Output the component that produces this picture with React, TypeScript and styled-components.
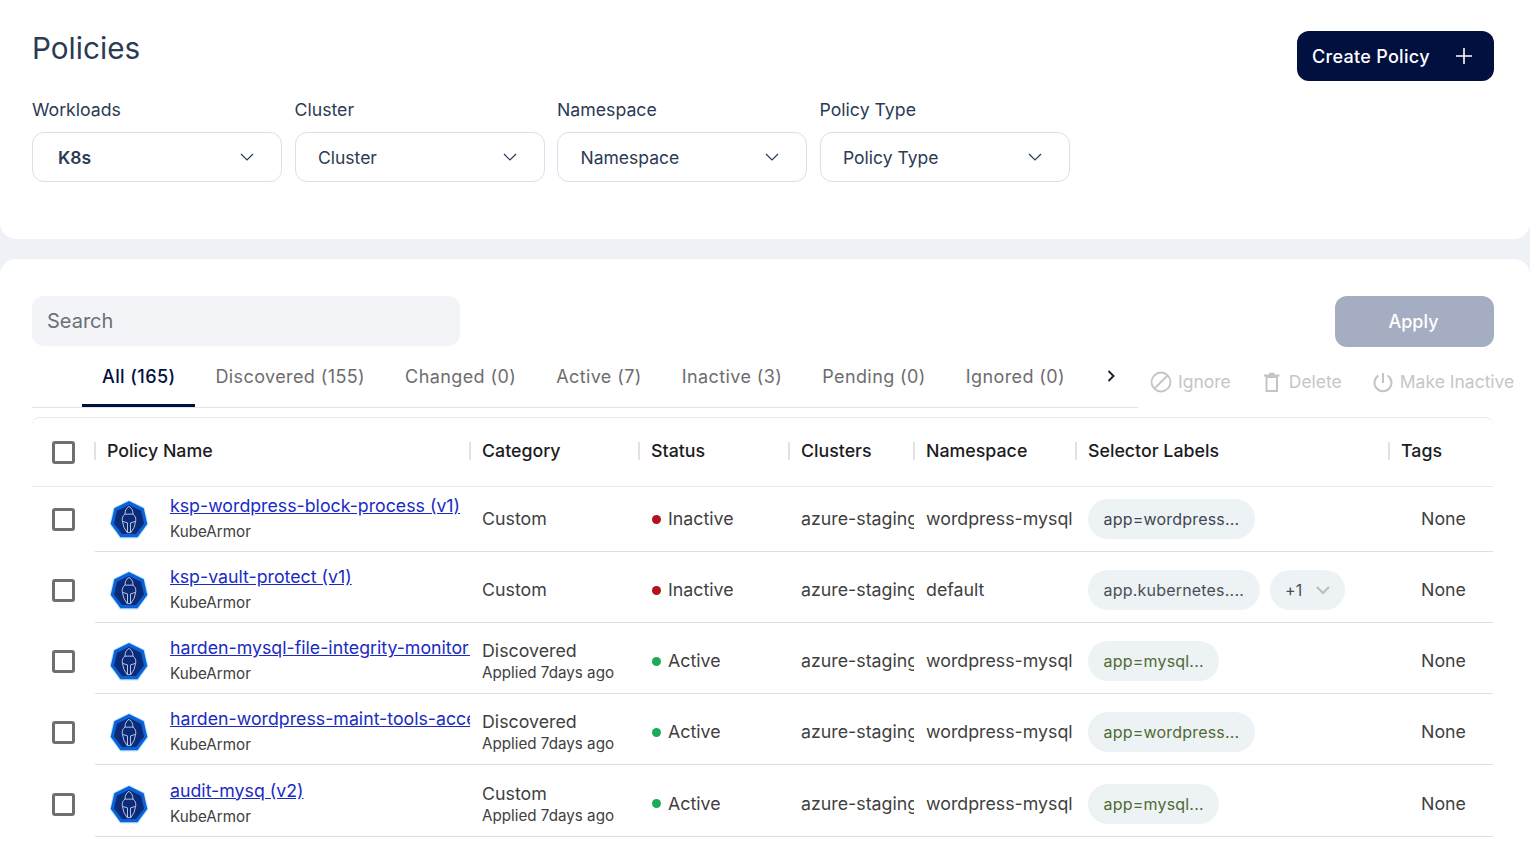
import React from 'react';
import styled, { createGlobalStyle } from 'styled-components';

const GlobalStyle = createGlobalStyle`
	html, body {
		margin: 0;
		padding: 0;
		height: 843px;
		overflow: hidden;
		background: #eef1f6;
		font-family: Inter, 'Liberation Sans', sans-serif;
	}
	* {
		box-sizing: border-box;
	}
`;

const FilterPanel = styled.section`
	height: 239px;
	padding: 31px 36px 0 32px;
	background: #fff;
	border-radius: 0 0 16px 16px;
	display: flex;
	justify-content: space-between;
	align-items: flex-start;
`;

const Title = styled.h1`
	margin: 0 0 27px;
	height: 35px;
	font-size: 29.7px;
	line-height: 35px;
	font-weight: 400;
	color: #2b3a55;
`;

const Filters = styled.div`
	display: flex;
	gap: 12.5px;
`;

const Filter = styled.div`
	width: 250px;
`;

const FilterLabel = styled.div`
	height: 35px;
	margin-bottom: 4px;
	font-size: 17.7px;
	line-height: 33px;
	color: #2b3a55;
`;

const Select = styled.div<{ $bold?: boolean; $inset?: number }>`
	height: 50px;
	padding: 0 27px 0 ${(p) => p.$inset ?? 22.5}px;
	border: 1px solid #d9dfec;
	border-radius: 12px;
	display: flex;
	justify-content: space-between;
	align-items: center;
	font-size: 17.5px;
	font-weight: ${(p) => (p.$bold ? 600 : 400)};
	color: #2b3a55;
`;

const CreateButton = styled.button`
	width: 197px;
	height: 50px;
	padding: 0 21px 0 15px;
	border: 0;
	border-radius: 12px;
	background: #02103f;
	color: #fff;
	display: flex;
	justify-content: space-between;
	align-items: center;
	font: 500 18px Inter, 'Liberation Sans', sans-serif;
	letter-spacing: 0.3px;
`;

const ListPanel = styled.section`
	height: 584px;
	margin-top: 20px;
	padding: 37px 0 0 32px;
	background: #fff;
	border-radius: 16px 16px 0 0;
	overflow: hidden;
`;

const SearchRow = styled.div`
	height: 51px;
	padding-right: 36px;
	display: flex;
	justify-content: space-between;
`;

const SearchBox = styled.div`
	width: 428px;
	height: 50px;
	padding-left: 15px;
	border-radius: 12px;
	background: #f2f4f8;
	display: flex;
	align-items: center;
	font-size: 20px;
	color: #6b6f76;
`;

const ApplyButton = styled.button`
	width: 159px;
	height: 51px;
	padding: 0 2px 0 0;
	border: 0;
	border-radius: 12px;
	background: #a4adc2;
	color: #fff;
	font: 500 18px Inter, 'Liberation Sans', sans-serif;
`;

const TabRow = styled.div`
	height: 61px;
	display: flex;
	align-items: flex-start;
`;

const Tabs = styled.div`
	width: 1106px;
	height: 61px;
	padding: 10px 0 0 50px;
	border-bottom: 1px solid #e2e4ea;
	display: flex;
`;

const Tab = styled.div<{ $active?: boolean }>`
	height: 50px;
	padding: 0 20px;
	font-size: 18px;
	line-height: 40px;
	font-weight: ${(p) => (p.$active ? 500 : 400)};
	letter-spacing: 0.4px;
	color: ${(p) => (p.$active ? '#02103f' : '#6d6d70')};
	border-bottom: 3px solid ${(p) => (p.$active ? '#02103f' : 'transparent')};
	white-space: nowrap;
`;

const TabArrow = styled.div`
	margin-left: 20px;
	height: 38px;
	display: flex;
	align-items: center;
	color: #1f2430;
`;

const Actions = styled.div`
	margin-left: 12px;
	padding-top: 23px;
	display: flex;
	gap: 30px;
	white-space: nowrap;
`;

const Action = styled.div`
	display: flex;
	align-items: center;
	gap: 6px;
	font-size: 17.5px;
	line-height: 24px;
	color: #c6c6c8;
`;

const Table = styled.div`
	width: 1461px;
	margin-top: 9px;
	border-top: 1px solid #e8e8f4;
	border-radius: 8px 8px 0 0;
`;

const columns = '63px 375px 169px 150px 125px 162px 313px 104px';

const HeaderRow = styled.div`
	display: grid;
	grid-template-columns: ${columns};
	height: 69px;
	align-items: center;
	border-bottom: 1px solid #e8e8f4;
`;

const HeaderCell = styled.div`
	height: 18px;
	margin: 0 0 3px -1px;
	padding-left: 11px;
	border-left: 2px solid #e2e2e2;
	display: flex;
	align-items: center;
	font-size: 17.8px;
	font-weight: 500;
	color: #1c1c22;
`;

const CheckCell = styled.div<{ $top?: number }>`
	padding: ${(p) => p.$top ?? 0}px 0 0 19.5px;
	display: flex;
	align-items: center;
`;

const Checkbox = styled.span`
	width: 23px;
	height: 23px;
	border: 3px solid #6f6f6f;
	border-radius: 3px;
	display: block;
`;

const Row = styled.div`
	display: grid;
	grid-template-columns: ${columns};
`;

const RowBody = styled.div<{ $height: number; $top: number }>`
	grid-column: 2 / -1;
	display: grid;
	grid-template-columns: 375px 169px 150px 125px 162px 313px 104px;
	height: ${(p) => p.$height}px;
	padding-top: ${(p) => p.$top}px;
	align-items: center;
	border-bottom: 1px solid #e0e0e0;
`;

const NameCell = styled.div`
	display: flex;
	align-items: center;
	overflow: hidden;
	padding-left: 13px;
	gap: 20px;
`;

const NameText = styled.div`
	min-width: 0;
	flex: 1;
	margin-bottom: 2px;
	overflow: hidden;
`;

const PolicyLink = styled.a`
	display: block;
	font-size: 17.75px;
	line-height: 24px;
	color: #1a2bc4;
	text-decoration: underline;
	white-space: nowrap;
	overflow: hidden;
`;

const SubText = styled.div`
	margin-top: 4px;
	font-size: 15.2px;
	line-height: 20px;
	color: #404040;
	white-space: nowrap;
`;

const Cell = styled.div`
	padding-left: 12px;
	font-size: 17.8px;
	line-height: 24px;
	color: #3f3f3f;
	white-space: nowrap;
	overflow: hidden;
`;

const AppliedText = styled(SubText)`
	margin-top: 0;
`;

const StatusCell = styled(Cell)`
	padding-left: 13px;
	display: flex;
	align-items: center;
	gap: 7px;
`;

const Dot = styled.span<{ $color: string }>`
	width: 9px;
	height: 9px;
	border-radius: 50%;
	background: ${(p) => p.$color};
`;

const Pills = styled.div`
	padding-left: 12px;
	display: flex;
	gap: 10px;
`;

const Pill = styled.div<{ $color: string }>`
	height: 40px;
	padding: 0 15.5px;
	border-radius: 20px;
	background: #edf2f5;
	display: flex;
	align-items: center;
	gap: 13px;
	font-size: 16px;
	letter-spacing: 0.2px;
	color: ${(p) => p.$color};
	white-space: nowrap;
`;

const TagCell = styled(Cell)`
	padding-left: 32px;
`;

type Policy = {
	name: string;
	category: string;
	applied?: boolean;
	active: boolean;
	namespace: string;
	pill: string;
	pillColor: string;
	extra?: boolean;
	height: number;
	top: number;
};

const policies: Policy[] = [
	{ name: 'ksp-wordpress-block-process (v1)', category: 'Custom', active: false, namespace: 'wordpress-mysql', pill: 'app=wordpress...', pillColor: '#3f4650', height: 65, top: 0 },
	{ name: 'ksp-vault-protect (v1)', category: 'Custom', active: false, namespace: 'default', pill: 'app.kubernetes....', pillColor: '#4a4f55', extra: true, height: 71, top: 6 },
	{ name: 'harden-mysql-file-integrity-monitoring', category: 'Discovered', applied: true, active: true, namespace: 'wordpress-mysql', pill: 'app=mysql...', pillColor: '#4f6b32', height: 71, top: 6 },
	{ name: 'harden-wordpress-maint-tools-access', category: 'Discovered', applied: true, active: true, namespace: 'wordpress-mysql', pill: 'app=wordpress...', pillColor: '#4f6b32', height: 71, top: 6 },
	{ name: 'audit-mysq (v2)', category: 'Custom', applied: true, active: true, namespace: 'wordpress-mysql', pill: 'app=mysql...', pillColor: '#4f6b32', height: 72, top: 6 },
];

const headers = ['Policy Name', 'Category', 'Status', 'Clusters', 'Namespace', 'Selector Labels', 'Tags'];
const tabs = ['All (165)', 'Discovered (155)', 'Changed (0)', 'Active (7)', 'Inactive (3)', 'Pending (0)', 'Ignored (0)'];

const Chevron = ({ size = 14, color = '#2b3a55', width = 1.2 }: { size?: number; color?: string; width?: number }) => (
	<svg width={size} height={size} viewBox="0 0 14 14" fill="none">
		<path d="M1 4 7 10 13 4" stroke={color} strokeWidth={width} />
	</svg>
);

const KubeArmorLogo = () => (
	<svg width="42" height="42" viewBox="0 -1 42 42" style={{ flex: 'none' }}>
		<polygon points="21,1 36.5,8.5 40.5,25 30,39.5 12,39.5 1.5,25 5.5,8.5" fill="#bfe6fb" />
		<polygon points="21,2 35.7,9.3 39.3,25 29.5,38.3 12.5,38.3 2.7,25 6.3,9.3" fill="#0a62d6" />
		<polygon points="21,6 33,11.8 36,24.5 28,35 14,35 6,24.5 9,11.8" fill="#0b2a78" />
		<g transform="translate(21 20.5) scale(1.25) translate(-21 -19)">
			<path
				d="M21 8.5c-2.4 1.4-3.2 3.6-3.2 6.2-1.7 1.2-2.4 3-2.2 5.3l1.3 5.2 2.6 4.3h3l2.6-4.3 1.3-5.2c.2-2.3-.5-4.1-2.2-5.3 0-2.6-.8-4.8-3.2-6.2zM17.8 14.7h6.4M15.8 20.5l4 1.2v7.5M26.2 20.5l-4 1.2v7.5"
				fill="none"
				stroke="#b9c4dc"
				strokeWidth="0.8"
			/>
		</g>
	</svg>
);

const App = () => {
	return (
		<>
			<GlobalStyle />
			<FilterPanel>
				<div>
					<Title>Policies</Title>
					<Filters>
						<Filter>
							<FilterLabel>Workloads</FilterLabel>
							<Select $bold $inset={25}>
								K8s
								<Chevron />
							</Select>
						</Filter>
						{['Cluster', 'Namespace', 'Policy Type'].map((label) => (
							<Filter key={label}>
								<FilterLabel>{label}</FilterLabel>
								<Select>
									{label}
									<Chevron />
								</Select>
							</Filter>
						))}
					</Filters>
				</div>
				<CreateButton>
					Create Policy
					<svg width="18" height="18" viewBox="0 0 18 18" fill="none">
						<path d="M9 1v16M1 9h16" stroke="#fff" strokeWidth="1.6" />
					</svg>
				</CreateButton>
			</FilterPanel>
			<ListPanel>
				<SearchRow>
					<SearchBox>Search</SearchBox>
					<ApplyButton>Apply</ApplyButton>
				</SearchRow>
				<TabRow>
					<Tabs>
						{tabs.map((tab, i) => (
							<Tab key={tab} $active={i === 0}>
								{tab}
							</Tab>
						))}
						<TabArrow>
							<svg width="12" height="14" viewBox="0 0 12 14" fill="none">
								<path d="M3.5 2 8.5 7 3.5 12" stroke="#1f2430" strokeWidth="2" />
							</svg>
						</TabArrow>
					</Tabs>
					<Actions>
						<Action>
							<svg width="22" height="22" viewBox="0 0 22 22" fill="none">
								<circle cx="11" cy="11" r="9.5" stroke="#c4c4c4" strokeWidth="1.8" />
								<path d="M4.5 17.5 17.5 4.5" stroke="#c4c4c4" strokeWidth="1.8" />
							</svg>
							Ignore
						</Action>
						<Action>
							<svg width="22" height="22" viewBox="0 0 22 22" fill="none">
								<path d="M5.5 6h10.5v14h-10.5zM3 4.5h15.5M8 2.8h5.5" stroke="#c4c4c4" strokeWidth="2" />
							</svg>
							Delete
						</Action>
						<Action>
							<svg width="22" height="22" viewBox="0 0 22 22" fill="none">
								<path d="M6.5 4.5a8.5 8.5 0 1 0 9 0M11 2v10" stroke="#c4c4c4" strokeWidth="2" />
							</svg>
							Make Inactive
						</Action>
					</Actions>
				</TabRow>
				<Table>
					<HeaderRow>
						<CheckCell>
							<Checkbox />
						</CheckCell>
						{headers.map((h) => (
							<HeaderCell key={h}>{h}</HeaderCell>
						))}
					</HeaderRow>
					{policies.map((p) => (
						<Row key={p.name}>
							<CheckCell $top={p.top}>
								<Checkbox />
							</CheckCell>
							<RowBody $height={p.height} $top={p.top}>
								<NameCell>
									<KubeArmorLogo />
									<NameText>
										<PolicyLink>{p.name}</PolicyLink>
										<SubText>KubeArmor</SubText>
									</NameText>
								</NameCell>
								<Cell>
									{p.category}
									{p.applied && <AppliedText>Applied 7days ago</AppliedText>}
								</Cell>
								<StatusCell>
									<Dot $color={p.active ? '#1faa59' : '#b3121d'} />
									{p.active ? 'Active' : 'Inactive'}
								</StatusCell>
								<Cell>azure-staging</Cell>
								<Cell>{p.namespace}</Cell>
								<Pills>
									<Pill $color={p.pillColor}>{p.pill}</Pill>
									{p.extra && (
										<Pill $color="#4a4f55">
											+1
											<Chevron size={14} color="#b9bcbf" width={2} />
										</Pill>
									)}
								</Pills>
								<TagCell>None</TagCell>
							</RowBody>
						</Row>
					))}
				</Table>
			</ListPanel>
		</>
	);
};

export default App;
